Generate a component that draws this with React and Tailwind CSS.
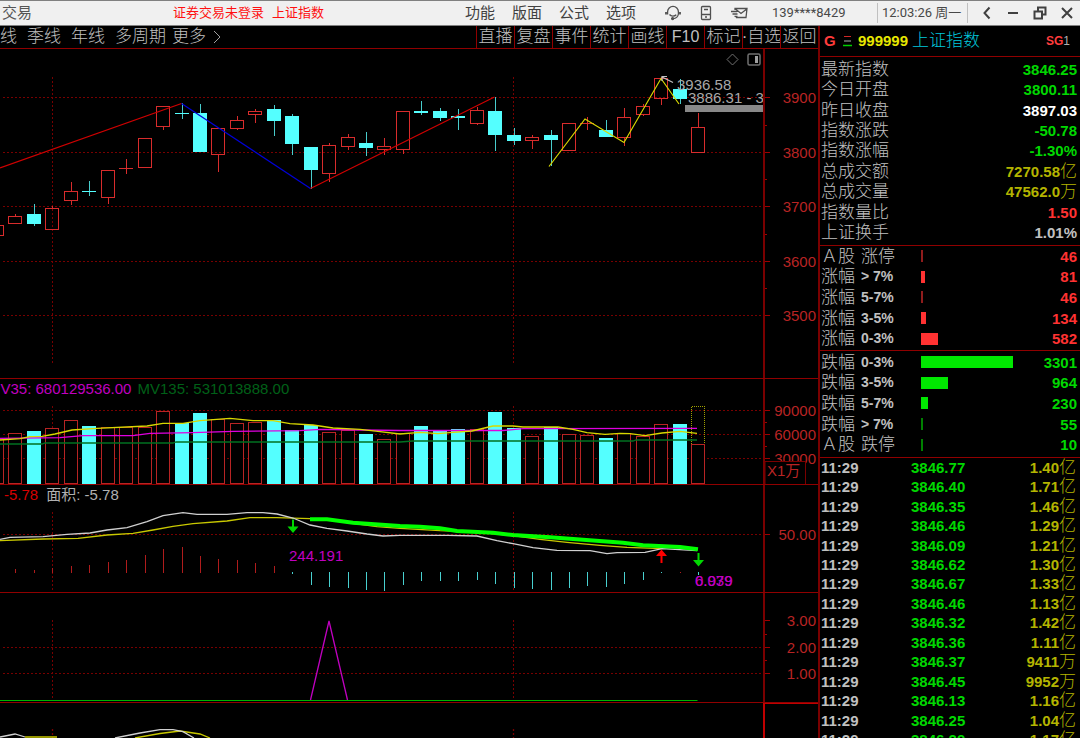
import React from 'react';

const STEP = 18.45;
const slotX = (i) => Math.round(i * STEP - 3);

// [direction, high, body top, body bottom, low]
const candles = [
  ['up', 225, 225, 235, 235],
  ['up', 214, 216, 223, 223],
  ['down', 204, 214, 224, 226],
  ['up', 206, 208, 229, 229],
  ['up', 182, 191, 200, 205],
  ['down', 181, 191, 191, 196],
  ['up', 170, 170, 197, 204],
  ['up', 159, 168, 168, 174],
  ['up', 138, 138, 167, 167],
  ['up', 106, 106, 126, 130],
  ['down', 103, 113, 113, 119],
  ['down', 104, 113, 152, 152],
  ['up', 128, 128, 154, 172],
  ['up', 116, 120, 128, 130],
  ['up', 109, 111, 114, 123],
  ['down', 105, 109, 121, 136],
  ['down', 114, 116, 144, 155],
  ['down', 147, 147, 170, 189],
  ['up', 143, 145, 173, 182],
  ['up', 134, 137, 146, 150],
  ['down', 132, 143, 148, 156],
  ['up', 138, 146, 149, 155],
  ['up', 111, 111, 149, 154],
  ['down', 101, 111, 113, 115],
  ['down', 108, 111, 118, 121],
  ['down', 109, 116, 118, 130],
  ['up', 107, 110, 123, 125],
  ['down', 97, 111, 135, 151],
  ['down', 128, 135, 141, 145],
  ['up', 135, 137, 140, 149],
  ['down', 130, 135, 140, 166],
  ['up', 123, 123, 150, 150],
  ['up', 117, 123, 123, 130],
  ['down', 120, 130, 137, 137],
  ['up', 108, 117, 137, 146],
  ['up', 104, 106, 114, 116],
  ['up', 77, 78, 98, 105],
  ['down', 79, 89, 99, 104],
  ['up', 113, 127, 152, 152],
];

const volumeTops = [
  439, 433, 431, 428, 420, 426, 427, 427, 427, 411, 423, 413, 419, 423, 422, 420, 430, 425, 432, 430,
  434, 439, 433, 426, 430, 429, 429, 412, 428, 436, 427, 434, 435, 438, 433, 436, 424, 424, 444,
];

// bar end of each slot: above the base line when red, below it when cyan
const macdBars = [
  573, 569, 570, 568, 566, 565, 562, 560, 555, 549, 547, 556, 559, 560, 563, 566, 574, 585, 587, 588,
  590, 591, 585, 581, 581, 581, 580, 584, 588, 589, 590, 588, 586, 587, 584, 580, 573, 572, 575,
];

const quotes = [
  ['最新指数', '3846.25', '', 'text-[#00d800]'],
  ['今日开盘', '3800.11', '', 'text-[#00d800]'],
  ['昨日收盘', '3897.03', '', 'text-white'],
  ['指数涨跌', '-50.78', '', 'text-[#00d800]'],
  ['指数涨幅', '-1.30%', '', 'text-[#00d800]'],
  ['总成交额', '7270.58', '亿', 'text-[#b4b400]'],
  ['总成交量', '47562.0', '万', 'text-[#b4b400]'],
  ['指数量比', '1.50', '', 'text-[#ff3232]'],
  ['上证换手', '1.01%', '', 'text-[#c0c0c0]'],
];

const rising = [
  ['Ａ股', '涨停', 46, 2],
  ['涨幅', '> 7%', 81, 4],
  ['涨幅', '5-7%', 46, 2],
  ['涨幅', '3-5%', 134, 5],
  ['涨幅', '0-3%', 582, 17],
];

const falling = [
  ['跌幅', '0-3%', 3301, 92],
  ['跌幅', '3-5%', 964, 27],
  ['跌幅', '5-7%', 230, 7],
  ['跌幅', '> 7%', 55, 2],
  ['Ａ股', '跌停', 10, 2],
];

const ticks = [
  ['3846.77', '1.40', '亿'],
  ['3846.40', '1.71', '亿'],
  ['3846.35', '1.46', '亿'],
  ['3846.46', '1.29', '亿'],
  ['3846.09', '1.21', '亿'],
  ['3846.62', '1.30', '亿'],
  ['3846.67', '1.33', '亿'],
  ['3846.46', '1.13', '亿'],
  ['3846.32', '1.42', '亿'],
  ['3846.36', '1.11', '亿'],
  ['3846.37', '9411', '万'],
  ['3846.45', '9952', '万'],
  ['3846.13', '1.16', '亿'],
  ['3846.25', '1.04', '亿'],
  ['3846.29', '1.17', '亿'],
];

const Grid = ({ rows, top, bottom }) => (
  <g stroke="#780000" strokeDasharray="2 2">
    {rows.map((y) => (
      <line key={y} x1="3" x2="100%" y1={y + 0.5} y2={y + 0.5} />
    ))}
    <line x1="52.5" x2="52.5" y1={top} y2={bottom} />
    <line x1="513.5" x2="513.5" y1={top} y2={bottom} />
  </g>
);

const Axis = ({ top, height, labels, minor = [], children }) => (
  <svg className="w-full border-l-2 border-[#7a0000]" height={height}>
    <g transform={`translate(0 ${-top})`}>
      <g stroke="#a00000" shapeRendering="crispEdges">
        {labels.map(([y]) => (
          <line key={y} x1="0" x2="5" y1={y + 0.5} y2={y + 0.5} />
        ))}
        {minor.map((y) => (
          <line key={y} x1="0" x2="2" y1={y + 0.5} y2={y + 0.5} />
        ))}
      </g>
      <g fill="#b82424" fontSize="15" textAnchor="end">
        {labels.map(([y, text]) => (
          <text key={y} x="51" y={y + 6}>{text}</text>
        ))}
      </g>
      {children}
    </g>
  </svg>
);

const Panel = ({ children }) => (
  <section className="grid shrink-0 grid-cols-[minmax(0,1fr)_55px] border-b border-[#900000]">{children}</section>
);

const TitleBar = () => (
  <header className="flex h-[26px] shrink-0 items-center overflow-hidden border-y border-[#808080] bg-[#f0f0f0] text-[15px] leading-5 text-[#404040]">
    <button className="w-[173px] pl-0.5 text-left text-[#555555]">交易</button>
    <div className="flex flex-1 gap-2 text-[13px] text-[#ff1010]">
      <span>证券交易未登录</span>
      <span>上证指数</span>
    </div>
    <nav className="grid w-[200px] grid-cols-[repeat(4,47px)]">
      <button className="text-left">功能</button>
      <button className="text-left">版面</button>
      <button className="text-left">公式</button>
      <button className="text-left">选项</button>
    </nav>
    <div className="flex w-[107px] items-center justify-between pr-[24px]">
      <button aria-label="客服">
        <svg width="16" height="16" viewBox="0 0 16 16" fill="none" stroke="#505050" strokeWidth="1.3">
          <path d="M2.6 9.5V6.8a5.4 5.4 0 0 1 10.8 0v2.4M13.4 9c-.4 2.6-2.4 4.6-5.4 4.6M4.5 9.5c1.5 2 5 2 6.8.2" />
          <path d="M1 7v2.500M15 7v2.500" strokeWidth="1.8" />
          <circle cx="7.6" cy="13.6" r="1" fill="#505050" />
        </svg>
      </button>
      <button aria-label="手机">
        <svg width="12" height="16" viewBox="0 0 12 16" fill="none" stroke="#505050" strokeWidth="1.3">
          <rect x="1.5" y="1.5" width="9" height="13" rx="1" />
          <path d="M1.5 9.5h9M4 4.500h4M5 12h2" />
        </svg>
      </button>
      <button aria-label="邮件">
        <svg width="17" height="14" viewBox="0 0 17 14" fill="none" stroke="#505050" strokeWidth="1.3">
          <path d="M4 4V2.500h12l-1 9H5.500L4.800 10M4.500 3l5.500 4.500L15.800 3M0 5.500h6M1.500 8h5M3.500 10.300h3" />
        </svg>
      </button>
    </div>
    <span className="w-[105px] font-[Roboto] text-[13px] text-[#484848]">139****8429</span>
    <time className="w-[91px] border-x border-[#c0c0c0] pl-1 font-[Roboto,'Noto_Sans_CJK_SC'] text-[13px] whitespace-nowrap text-[#484848]">
      12:03:26 周一
    </time>
    <div className="flex w-[112px] items-center justify-between pr-1.5 pl-3">
      <button aria-label="后退">
        <svg width="14" height="14" viewBox="0 0 14 14" fill="none" stroke="#404040" strokeWidth="2">
          <path d="M9.500 1.500L4.500 7l5 5.500" />
        </svg>
      </button>
      <button aria-label="最小化">
        <svg width="12" height="14" viewBox="0 0 12 14" stroke="#404040" strokeWidth="2">
          <path d="M1 7h10" />
        </svg>
      </button>
      <button aria-label="还原">
        <svg width="14" height="14" viewBox="0 0 14 14" fill="none" stroke="#404040" strokeWidth="2">
          <path d="M1.500 5.500h7.500v7h-7.500zM5 5V1.500h7.500v7H9.500" />
        </svg>
      </button>
      <button aria-label="关闭">
        <svg width="14" height="14" viewBox="0 0 14 14" stroke="#404040" strokeWidth="2">
          <path d="M2 2l10 10M12 2L2 12" />
        </svg>
      </button>
    </div>
  </header>
);

const Toolbar = () => (
  <nav className="flex h-[23px] shrink-0 items-center justify-between overflow-hidden border-b border-[#900000] text-[17px] leading-[22px] font-light whitespace-nowrap text-[#c0c0c0]">
    <div className="flex items-center gap-2.5">
      <button>线</button>
      <button>季线</button>
      <button>年线</button>
      <button>多周期</button>
      <button className="-ml-1 flex items-center gap-1.5">
        更多
        <svg width="10" height="16" viewBox="0 0 10 16" fill="none" stroke="#a0a0a0">
          <path d="M2 2l6 6-6 6" />
        </svg>
      </button>
    </div>
    <div className="grid grid-cols-[repeat(9,38px)]">
      {['直播', '复盘', '事件', '统计', '画线', 'F10', '标记', '·自选', '返回'].map((name) => (
        <button key={name} className="flex h-[22px] justify-center overflow-hidden border-l border-[#900000]">
          {name === 'F10' ? <span className="text-[16px]">F10</span> : name}
        </button>
      ))}
    </div>
  </nav>
);

const PricePanel = () => (
  <Panel>
    <div className="relative">
      <svg className="w-full" height="329">
        <g transform="translate(0 -49)">
          <Grid rows={[97, 152, 206, 261, 315]} top={77} bottom={364} />
          <g shapeRendering="crispEdges">
            {candles.map(([dir, high, top, bottom, low], i) => {
              const x = slotX(i) + 0.5;
              const color = dir === 'up' ? '#d82c2c' : '#54ffff';
              const wick = dir === 'up' ? '#d82c2c' : '#48cccc';
              return (
                <g key={i} stroke={color} fill={dir === 'up' ? 'none' : color}>
                  {high < top && <line x1={x} x2={x} y1={high} y2={top} stroke={wick} />}
                  {low > bottom && <line x1={x} x2={x} y1={bottom} y2={low} stroke={wick} />}
                  <rect x={x - 7} y={top + 0.5} width="13" height={Math.max(bottom - top - (dir === 'up' ? 0 : 1), 0.1)} />
                </g>
              );
            })}
          </g>
          <g fill="none" strokeWidth="1.2">
            <path d="M0 168L181.5 103.5" stroke="#d00000" />
            <path d="M181.5 103.5L310.5 188.5" stroke="#0000d8" />
            <path d="M310.5 188.5L494.5 97" stroke="#d00000" />
            <path d="M549 166.5L585 119L624 142.5L661 78.5L679 104" stroke="#d8d800" />
            <path d="M673 82.5L662 77M662 81V76.500H667" stroke="#c0c0c0" />
          </g>
          <rect x="685" y="105" width="100%" height="7" fill="#888888" />
          <g fill="#a8a8a8" fontSize="15">
            <text x="677" y="90">3936.58</text>
            <text x="688" y="103">3886.31 - 3846.25</text>
          </g>
        </g>
      </svg>
      <div className="absolute top-1 right-0.5 flex gap-2 text-[#707070]">
        <button aria-label="标记">
          <svg width="13" height="13" viewBox="0 0 13 13" fill="none" stroke="currentColor">
            <path d="M6.500 1L12 6.500L6.500 12L1 6.500z" />
          </svg>
        </button>
        <button aria-label="侧栏">
          <svg width="14" height="13" viewBox="0 0 14 13" fill="none" stroke="currentColor" strokeWidth="1.5">
            <rect x="1" y="1" width="12" height="11" rx="1.5" />
            <rect x="8" y="3" width="3" height="7" fill="#a0a0a0" stroke="none" />
          </svg>
        </button>
      </div>
    </div>
    <Axis
      top={49}
      height={329}
      labels={[[97, '3900'], [152, '3800'], [206, '3700'], [261, '3600'], [315, '3500']]}
      minor={[125, 179, 234, 288]}
    />
  </Panel>
);

const VolumePanel = () => (
  <Panel>
    <div>
      <p className="-ml-3 flex h-5 gap-1.5 overflow-hidden text-[15px] leading-5 whitespace-nowrap">
        <span className="text-[#c000c0]">MV35: 680129536.00</span>
        <span className="text-[#006018]">MV135: 531013888.00</span>
      </p>
      <svg className="w-full" height="85">
        <g transform="translate(0 -399)">
          <Grid rows={[410, 434, 458]} top={406} bottom={484} />
          <g shapeRendering="crispEdges">
            {volumeTops.map((y, i) => (
              <rect
                key={i}
                x={slotX(i) - 6.5}
                y={y + 0.5}
                width="13"
                height={483 - y}
                fill={candles[i][0] === 'up' ? 'black' : '#54ffff'}
                stroke={candles[i][0] === 'up' ? '#b82424' : '#54ffff'}
              />
            ))}
            <path d="M691.5 444V406.5H704.5V444" fill="none" stroke="#a0a000" strokeDasharray="1 1" />
          </g>
          <g fill="none" strokeWidth="1.3">
            <path d="M0 444L42 444L45 443H173L176 442H400L413 441H633L636 440H697" stroke="#007020" />
            <path
              d="M0 438.300L60 437.700L83 435.700H133L150 433.300L193 432.700L233 431.300L300 430.700L320 429.300L360 430L400 430.500H503L523 428.700L697 428.300"
              stroke="#e000e0"
            />
            <path
              d="M0 440L20 438.700L30 436.700L42 436.300L55 434L72 430L97 428.300L147 426L163 423.300H183L200 420.700L230 418.300L253 420.700H273L290 423.700L313 425L333 428L360 429.300L380 431.700L400 434L420 432.300L438 433.700L453 432.300L472 431L493 426H513L523 427H558L573 429.300L587 432.700L605 434.300L620 433.300L630 433.700L645 435.700L662 433L680 431.300L697 433.300"
              stroke="#d8d800"
            />
          </g>
        </g>
      </svg>
    </div>
    <Axis top={379} height={105} labels={[[410, '90000'], [434, '60000'], [458, '30000']]} minor={[422, 446]}>
      <rect x="0" y="461.5" width="40.5" height="24" fill="black" stroke="#7a0000" />
      <text x="2" y="475.5" fill="#b82424" fontSize="15">X1万</text>
    </Axis>
  </Panel>
);

const MacdPanel = () => (
  <Panel>
    <div>
      <p className="flex h-5 gap-2 pl-1 text-[15px] leading-5">
        <span className="text-[#d80000]">-5.78</span>
        <span className="text-[#b0b0b0]">面积: -5.78</span>
      </p>
      <svg className="w-full" height="87">
        <g transform="translate(0 -505)">
          <Grid rows={[534]} top={512} bottom={592} />
          <g shapeRendering="crispEdges">
            {macdBars.map((y, i) => (
              <line
                key={i}
                x1={slotX(i) + 0.5}
                x2={slotX(i) + 0.5}
                y1={y < 573 ? 573 : 572}
                y2={y}
                stroke={y < 573 ? '#b01c1c' : '#48d0d0'}
              />
            ))}
          </g>
          <g fill="none" strokeWidth="1.3">
            <path
              d="M0 540.700L43 539L78 538.300L107 535L133 533.300L153 530L173 526.300L193 523.700L227 521L250 517.700H277L310 518.700L333 520.700L362 524.700L377 526.700L400 528.300L440 530.700L477 532L513 535.700L540 539.300L567 542.300L600 545.300L627 547.300L662 548.700"
              stroke="#c8c800"
            />
            <path
              d="M0 539.300L10 537.300L43 536.700L67 534.300L90 533L107 530L127 527.700L147 521.700L163 515.700L183 512.700L197 514.300H227L247 512.700H263L277 514L293 518L310 525L327 528.300L347 531L367 534L383 536L400 535.300H448L477 536L497 540.700L513 543.700L533 547.700L557 550.300L590 550.700L607 553.700L617 552.700L645 552.300L662 548.700L697 550.700"
              stroke="#d0d0d0"
            />
            <path
              d="M310 519.300H327L353 522.700L400 526L420 526.700L440 528.300L457 531L493 532.700L513 535L550 537.300L583 539.700L623 542.700L643 545.300L680 547L698 549.300"
              stroke="#00ff00"
              strokeWidth="4"
            />
          </g>
          <path d="M292 519.500h2v7h4.500l-5.500 6.500l-5.500-6.500h4.500z" fill="#00d800" />
          <path d="M697.500 553h2v7h4.500l-5.500 6.500l-5.500-6.500h4.500z" fill="#00d800" />
          <path d="M660.500 563h2v-7h4.500l-5.500-6.500l-5.500 6.500h4.500z" fill="#ff0000" />
          <g fill="#c000c0" fontSize="15">
            <text x="289" y="561">244.191</text>
            <text x="695" y="586">0.039</text>
            <text x="695" y="586">6.979</text>
          </g>
        </g>
      </svg>
    </div>
    <Axis top={485} height={107} labels={[[534, '50.00']]} />
  </Panel>
);

const SignalPanel = () => (
  <Panel>
    <svg className="w-full" height="109">
      <g transform="translate(0 -593)">
        <Grid rows={[647, 673]} top={620} bottom={699} />
        <path d="M310.5 700L329 621L347.5 700" fill="none" stroke="#c000c0" strokeWidth="1.3" />
        <path d="M0 700.5H697.5" stroke="#00b400" />
      </g>
    </svg>
    <Axis top={593} height={109} labels={[[620, '3.00'], [647, '2.00'], [673, '1.00']]} minor={[634, 660]} />
  </Panel>
);

const LastPanel = () => (
  <section className="grid flex-1 grid-cols-[minmax(0,1fr)_55px]">
    <svg className="h-full w-full">
      <g transform="translate(0 -703)" fill="none" strokeWidth="1.3">
        <Grid rows={[]} top={729} bottom={760} />
        <path d="M25 737H57M135 738L160 733.500L180 731L200 734L210 738" stroke="#c8c800" />
        <path d="M0 737L15 734L25 737M115 738L140 733L160 729.700H173L183 731.700L194 738" stroke="#d0d0d0" />
      </g>
    </svg>
    <div className="border-t border-l-2 border-[#c00000]" />
  </section>
);

const BreadthTable = ({ rows, name, color, bar, thin }) => (
  <table className="h-[103px] w-full" aria-label={name}>
    <tbody>
      {rows.map(([kind, range, count, width]) => (
        <tr key={range}>
          <th className="w-[101px] p-0 pl-px text-left leading-none font-light">
            <span className="flex items-center gap-1.5 leading-[19px]">
              <span>{kind}</span>
              <span className={/\d/.test(range) ? 'text-[14px] font-bold' : ''}>{range}</span>
            </span>
          </th>
          <td className="p-0">
            <div className={`h-3 ${width > 2 ? bar : thin}`} style={{ width }} />
          </td>
          <td className={`p-0 pr-[3px] text-right text-[15px] leading-[19px] font-bold ${color}`}>{count}</td>
        </tr>
      ))}
    </tbody>
  </table>
);

const Sidebar = () => (
  <aside className="w-[262px] shrink-0 overflow-hidden border-l-2 border-[#7a0000] text-[17px] text-[#c0c0c0]">
    <h1 className="flex h-[31px] items-center border-b border-[#900000] pr-2.5 pl-1 text-[15px] font-bold">
      <span className="w-[19px] text-[#ff3c3c]">G</span>
      <svg className="shrink-0" width="9" height="12" viewBox="0 0 9 12">
        <path d="M1 1.500h7" stroke="#d02828" />
        <path d="M1 6h7" stroke="#b0b0b0" />
        <path d="M0 10.500h9" stroke="#00d000" strokeWidth="1.5" />
      </svg>
      <span className="pl-1.5 text-[#e8e800]">999999</span>
      <span className="flex-1 pl-1 text-[17px] font-light text-[#00c8dc]">上证指数</span>
      <span className="text-[12px] text-[#ff3c3c]">
        SG<span className="font-normal text-[#b0b0b0]">1</span>
      </span>
    </h1>
    <div className="border-b border-[#900000] py-0.5">
      <table className="h-[184px] w-full" aria-label="行情">
        <tbody>
          {quotes.map(([label, value, unit, color]) => (
            <tr key={label}>
              <th className="p-0 pl-px text-left leading-[19px] font-light">{label}</th>
              <td className={`p-0 pr-[3px] text-right text-[15px] leading-[19px] font-bold ${color}`}>
                {value}
                {unit && <span className="text-[17px] leading-none font-light">{unit}</span>}
              </td>
            </tr>
          ))}
        </tbody>
      </table>
    </div>
    <div className="border-b border-[#900000] pb-px">
      <BreadthTable rows={rising} name="上涨分布" color="text-[#ff3232]" bar="bg-[#ff3232]" thin="bg-[#901c1c]" />
    </div>
    <div className="border-b border-[#900000] pt-px pb-0.5">
      <BreadthTable rows={falling} name="下跌分布" color="text-[#00d800]" bar="bg-[#00e800]" thin="bg-[#008000]" />
    </div>
    <table className="h-[292px] w-full text-[15px] font-bold" aria-label="成交明细">
      <tbody>
        {ticks.map(([price, amount, unit], i) => (
          <tr key={i}>
            <td className="w-[91px] p-0 pl-px leading-[18px]">11:29</td>
            <td className="p-0 leading-[18px] text-[#00d800]">{price}</td>
            <td className="p-0 pr-1 text-right leading-[18px] text-[#b4b400]">
              {amount}
              <span className="text-[17px] leading-none font-light">{unit}</span>
            </td>
          </tr>
        ))}
      </tbody>
    </table>
  </aside>
);

export default function App() {
  return (
    <div className="flex h-screen flex-col overflow-hidden bg-black font-['Liberation_Sans','Noto_Sans_CJK_SC',sans-serif]">
      <TitleBar />
      <div className="flex min-h-0 flex-1">
        <main className="flex min-w-0 flex-1 flex-col overflow-hidden">
          <Toolbar />
          <PricePanel />
          <VolumePanel />
          <MacdPanel />
          <SignalPanel />
          <LastPanel />
        </main>
        <Sidebar />
      </div>
    </div>
  );
}
